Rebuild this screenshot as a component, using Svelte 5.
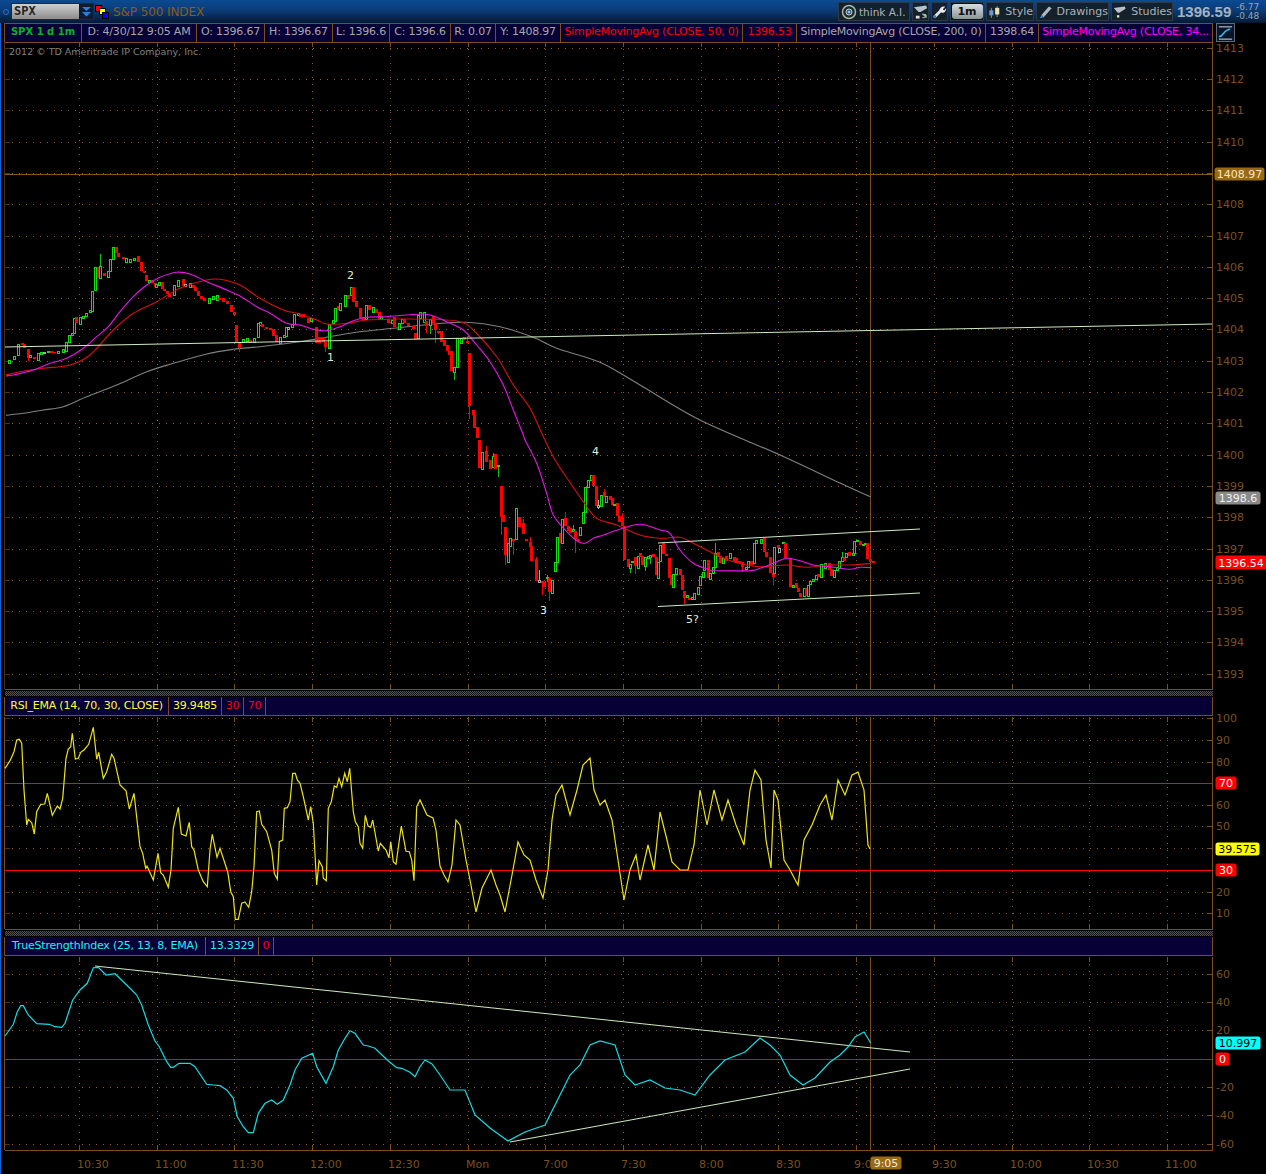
<script>
  const map = (ox, oy, s) =>
    s.trim().split(/\s+/).map((p) => {
      const [x, y] = p.split(',').map(Number);
      return [ox + x / 3, oy + y / 3];
    });
  const path = (pts) => pts.map((p) => p[0].toFixed(1) + ',' + p[1].toFixed(1)).join(' ');
  const smooth = (pts) => {
    let d = 'M' + pts[0][0].toFixed(1) + ' ' + pts[0][1].toFixed(1);
    for (let i = 0; i < pts.length - 1; i++) {
      const p0 = pts[i - 1] ?? pts[i];
      const p1 = pts[i];
      const p2 = pts[i + 1];
      const p3 = pts[i + 2] ?? p2;
      const c1x = p1[0] + (p2[0] - p0[0]) / 6;
      const c1y = p1[1] + (p2[1] - p0[1]) / 6;
      const c2x = p2[0] - (p3[0] - p1[0]) / 6;
      const c2y = p2[1] - (p3[1] - p1[1]) / 6;
      d += `C${c1x.toFixed(1)} ${c1y.toFixed(1)} ${c2x.toFixed(1)} ${c2y.toFixed(1)} ${p2[0].toFixed(1)} ${p2[1].toFixed(1)}`;
    }
    return d;
  };

  const candleGroups = [
    [0, 230, 'g25,390,398 g40,378,388 g50,342,375 r62,340,345 r70,342,355 r80,358,385,,392 g88,376,382 r100,380,387 g110,370,390 g120,366,373 w130,366,369 g140,362,366 r150,363,368 r160,366,370 g170,362,368 g185,358,365 g196,336,362 g204,316,336 g214,310,316 g218,265,310 r226,262,280 g236,262,282 g245,258,265 g256,250,258 g266,240,246 g274,183,242 g281,110,179 r292,112,145 g296,108,145,72 r310,130,138 g320,122,142 g328,86,122 g335,52,88 r345,52,68 r352,68,82 r365,80,88 g375,84,95 g388,88,95 g398,84,90 r412,78,96 r420,96,122 r428,122,130 r436,134,152 g444,150,156 r452,150,158 r462,158,170 g466,163,170 g474,155,165 r482,156,178 r490,178,184 r498,184,192 r505,192,200 g520,166,196 g530,150,168 r545,148,168 w552,163,168 g568,160,170 r576,165,175 r583,172,182 r592,182,198 r600,198,206 r610,204,212 g625,205,218 g636,198,208 g648,196,210 r655,205,210 r665,205,216 r678,214,222 r690,225,245 r700,245,255 r706,285,335 r715,335,355,,365 g725,328,336 g738,325,332 r746,330,340 g760,325,335 g770,280,320 g778,275,285 r784,282,292 r796,290,296 r808,294,300 r816,298,318 r825,315,335 g838,320,340 g848,316,322 g855,292,318 w862,290,296 g872,282,292 g878,252,282 g890,250,256 r898,255,260'],
    [300, 260, 'r5,162,172 r22,175,188 g30,175,184 r45,200,250 r55,232,250 r65,232,246 r72,246,262,,275 g85,192,264 g95,180,188 g103,145,182 r110,138,150 g118,128,150 g133,105,138 r142,105,118 g150,82,105 r157,82,126 r165,124,142 r178,145,175 r185,172,180 g196,136,176 r203,136,150 g216,140,155 r225,148,158 r235,155,180 g241,172,178 r262,178,188 g272,180,190 r280,172,200 g295,190,208 g303,178,190 r310,178,190 r320,190,198 r335,198,206 r343,220,236 g350,165,235 g357,155,175 g368,155,185 r375,182,198,,220 g388,178,195,,222 r397,168,190 r403,190,210,,250 r412,214,218,,222 r420,214,245 r428,240,258 r437,255,272 r445,272,285 r451,272,332 g460,322,335,,360 g467,235,322 g480,235,248 r490,232,240 r497,243,248,228,250 r505,280,438,,478 r515,450,465 r519,465,503 r529,502,535'],
    [440, 440, 'r114,0,83 g124,35,86 r135,33,65,18 r148,60,86 g155,48,82,38 r163,42,86 g172,76,78,,112 r179,138,232,,285 r187,226,245 r192,262,345,,375 g202,310,365 g208,293,317 r216,298,302,,345 g226,205,298 r233,232,262 r245,248,282,238 r256,297,302 r266,305,320,292 r271,318,362 r285,358,422,350 w295,420,425,390 r302,424,430,,465 r310,427,442 g318,410,415,405,425 r325,415,455,,482 g334,420,458 g341,367,392 g349,292,365 r357,278,308 g364,238,308 r373,235,258,215 r380,258,272 r388,265,280 g396,268,272,255 r403,272,296,,338 r412,296,302 g418,262,285 g427,215,250 g433,140,215 g442,120,142 g450,105,120 r457,105,138 r466,138,198 w472,195,200,180,208 g481,165,197 r490,156,172,148 g496,168,185 r508,168,180 r512,175,195 g520,192,196 r527,190,228 r535,228,245 r544,238,258,220 r550,258,360 r560,358,382 g566,372,385,,398 g574,362,367 r582,352,378,,402 g590,347,385 r598,340,350 r604,348,376 g612,350,378,,392 g620,348,354 g628,345,352,,372 r636,342,352 r644,352,405 g652,366,415 g658,315,362 r666,310,342,305 r676,342,348 r683,355,415 r690,405,435 g697,402,440 g706,385,402 r716,388,405 r722,405,450 r730,453,475,,492 g737,465,472 r745,475,480'],
    [650, 520, 'g122,232,236 g128,220,236 g140,202,222 g146,168,195 g155,155,170 g160,120,150 r170,120,175 g178,160,178 g186,140,160 g192,100,140,70 r200,95,110 r208,108,130 g215,115,130 r224,108,122 g238,100,115 r248,110,125 r256,115,128 r265,122,128 r272,125,140,,155 g284,142,146 g290,124,140 r300,124,136 g310,68,128 g316,60,68 g331,58,68 r340,55,95 r346,95,110 r356,110,160 r365,160,170,,195 g370,80,160 r380,75,85 w385,85,95 g395,65,70 r403,68,115 r418,115,200 g425,195,200 r434,190,205 r440,205,215 r448,218,232 g458,205,228 r464,205,228 g472,195,228 g478,182,192 g486,178,182 g494,165,178 r502,163,172 g511,132,170 g522,130,145 r534,130,150 r540,148,168 g550,150,170 g557,142,150 g565,122,145 g572,110,122,95 r580,110,122 g586,98,112 r595,96,108 g605,98,104 g610,62,98 g618,60,64 r628,63,74 g636,72,76 g643,70,72 r649,70,118 r657,118,125 r665,124,128']
  ];

  const candles = candleGroups.flatMap(([ox, oy, s]) =>
    s.split(' ').map((t) => {
      const k = t[0];
      const [x, a, b, wt, wb] = t.slice(1).split(',');
      const cx = Math.round(ox + x / 3);
      return {
        k,
        cx,
        top: Math.round(oy + a / 3),
        bot: Math.round(oy + b / 3),
        wt: wt ? Math.round(oy + wt / 3) : null,
        wb: wb ? Math.round(oy + wb / 3) : null
      };
    })
  );

  const magenta = smooth([
    ...map(0, 230, '18,438 40,435 100,420 150,400 200,385 250,355 290,320 325,290 360,245 400,200 440,165 480,142 530,127 570,132 620,155 680,180 720,198 770,230 810,250 860,280 900,285'),
    ...map(300, 260, '40,208 80,212 120,200 160,182 200,172 260,170 320,165 370,162 400,168 440,185 490,210 530,255 570,305 610,375 640,450 670,525'),
    ...map(440, 440, '255,0 290,70 320,160 340,225 380,275 410,302 435,310 460,295 490,285 540,268 600,253 660,270 690,280'),
    ...map(650, 520, '90,90 130,130 180,150 195,152 300,152 330,145 370,130 410,115 450,122 490,135 550,142 600,148 630,142 665,143')
  ]);
  const redLine = smooth([
    ...map(0, 230, '18,435 60,425 130,415 210,405 270,375 340,300 400,250 470,215 540,175 620,150 660,148 720,165 780,205 850,240 900,252'),
    ...map(300, 260, '50,180 80,192 140,190 200,180 300,177 400,178 480,185 520,210 590,290 640,375 690,445 730,530'),
    ...map(440, 440, '345,60 385,120 430,185 470,235 530,255 600,285 660,295 720,292'),
    ...map(650, 520, '130,70 200,105 250,125 290,135 340,140 410,135 470,142 530,135 600,135 665,130')
  ]);
  const greyLine = smooth([
    ...map(0, 230, '18,556 70,550 130,540 190,530 260,500 350,465 440,425 520,400 620,372 700,358 780,350 900,335'),
    ...map(300, 260, '100,228 180,215 280,205 400,192 500,187 600,200 700,232 770,265 900,307'),
    ...map(0, 0, '1920,1155 2100,1260 2340,1365 2520,1449 2612,1491')
  ]);
  const rsi = path([
    ...map(0, 690, '15,235 30,212 42,185 50,150 58,148 65,160 72,300 80,405 85,388 95,398 103,432 110,365 122,343 134,342 142,310 157,376 172,348 180,357 188,325 198,205 205,177 212,170 217,130 226,207 235,205 242,187 252,180 266,163 280,112 290,208 296,187 310,265 320,245 335,193 342,205 360,285 378,302 388,357 402,310 420,470 428,490 437,535 441,528 460,570 474,490 482,548 490,555 505,592 513,540 520,415 535,352 544,432 558,438 568,397 575,470 582,480 595,540 610,575 622,590 630,480 637,433 651,502 660,475 683,545 692,605 700,620 706,688 715,688 725,640 735,636 746,652 755,605 762,530 770,365 778,363 785,403 800,425 815,480 823,550 832,568 838,455 848,450 853,355 862,353 870,335 878,250 886,250 892,270 900,280 910,320 925,390 932,350 940,400 950,585 957,512 967,530 970,565 979,572 985,355 994,335 1003,288 1010,292 1017,265 1025,290 1034,250 1042,275 1049,235 1060,365 1066,395 1075,410 1080,460 1088,475 1096,376 1104,408 1112,412 1118,390 1135,483 1141,460 1158,480 1167,503 1172,455 1180,515 1188,523 1204,408 1218,484 1228,485 1235,510 1242,572 1250,350 1260,330'),
    ...[[427,815],[433,818],[436,830],[440,866],[444,875],[448,882],[452,865],[456,820],[460,825],[466,860],[470,880],[476,912],[482,888],[486,880],[491,870],[496,885],[500,895],[505,912],[512,875],[518,842],[524,855],[530,860],[536,880],[543,898],[548,870],[552,820],[556,795],[562,785],[570,815],[577,790],[583,765],[590,758],[594,790],[600,805],[605,800],[612,820],[618,860],[624,900],[630,870],[636,855],[640,880],[648,845],[654,870],[660,812],[667,840],[672,862],[680,870],[688,870],[694,845],[700,790],[707,825],[714,790],[722,820],[728,800],[736,825],[744,845],[750,790],[755,770],[761,780],[766,840],[771,868],[774,790],[778,800],[784,860],[790,870],[798,885],[804,840],[812,825],[820,805],[826,795],[832,820],[838,780],[845,795],[852,775],[858,772],[864,790],[868,845],[870,849]]
  ]);
  const tsi = path([
    ...map(0, 935, '15,303 28,285 40,268 52,230 62,212 70,212 85,240 110,266 148,268 165,275 185,277 195,265 205,235 218,195 240,165 262,145 280,98 295,97 318,120 345,116 370,140 390,160 410,180 425,210 445,270 465,318 478,335 500,380 512,397 520,397 537,385 570,385 585,395 620,448 640,450 660,452 680,465 700,490 712,545 730,575 745,593 760,593 775,535 795,505 815,495 832,508 850,495 870,450 885,405 905,370 938,355 950,395 978,445 1000,395 1015,345 1035,310 1050,287 1065,295 1090,330 1105,333 1125,340 1165,378 1190,398 1205,400 1230,412 1245,425 1260,395'),
    ...[[425,1060],[432,1064],[440,1075],[450,1090],[465,1090],[475,1115],[490,1128],[508,1141],[525,1132],[545,1125],[555,1105],[570,1075],[580,1065],[590,1045],[600,1041],[615,1045],[625,1075],[635,1085],[650,1080],[665,1088],[680,1090],[695,1095],[710,1075],[725,1060],[745,1052],[760,1038],[770,1045],[780,1055],[790,1075],[803,1085],[815,1078],[830,1062],[840,1055],[848,1047],[855,1037],[864,1032],[870.7,1043]]
  ]);

  const gridX = Array.from({ length: 15 }, (_, i) => Math.round(79 + 77.72 * i) + 0.5);
  const times = ['10:30','11:00','11:30','12:00','12:30','Mon','7:00','7:30','8:00','8:30','9:00','9:30','10:00','10:30','11:00'];

  const prices = Array.from({ length: 21 }, (_, i) => ({ v: 1413 - i, y: Math.round(47.7 + 31.3 * i) }));
  const rsiTicks = [[100,718],[90,740],[80,762],[70,783],[60,805],[50,826],[40,848],[30,870],[20,892],[10,913]];
  const tsiTicks = [[60,974],[40,1002],[20,1030],[0,1059],[-20,1087],[-40,1115],[-60,1144]];
  const hiddenPrice = 1409, hiddenRsi = [70, 40, 30], hiddenTsi = [0];

  const legend1 = [
    { t: 'SPX 1 d 1m', w: 77, c: 'sym' },
    { t: 'D: 4/30/12 9:05 AM', w: 115 },
    { t: 'O: 1396.67', w: 68 },
    { t: 'H: 1396.67', w: 68 },
    { t: 'L: 1396.6', w: 57 },
    { t: 'C: 1396.6', w: 61 },
    { t: 'R: 0.07', w: 45 },
    { t: 'Y: 1408.97', w: 65 },
    { t: 'SimpleMovingAvg (CLOSE, 50, 0)', w: 182, c: 'red' },
    { t: '1396.53', w: 54, c: 'red' },
    { t: 'SimpleMovingAvg (CLOSE, 200, 0)', w: 189 },
    { t: '1398.64', w: 53 },
    { t: 'SimpleMovingAvg (CLOSE, 34...', w: 174, c: 'mag' }
  ];
  const legend2 = [
    { t: 'RSI_EMA (14, 70, 30, CLOSE)', w: 164, c: 'yel' },
    { t: '39.9485', w: 53, c: 'yel' },
    { t: '30', w: 22, c: 'red' },
    { t: '70', w: 22, c: 'red' }
  ];
  const legend3 = [
    { t: 'TrueStrengthIndex (25, 13, 8, EMA)', w: 201, c: 'cyan' },
    { t: '13.3329', w: 53, c: 'cyan' },
    { t: '0', w: 15, c: 'red' }
  ];
</script>

{#snippet legend(cells, cls)}
  <div class="legend {cls}">
    {#each cells as cell}
      <span class="cell {cell.c ?? ''}" style="width:{cell.w}px">{cell.t}</span>
    {/each}
  </div>
{/snippet}

{#snippet grid(top, bottom, rows, hidden, leftClass)}
  {#each gridX as x}
    <line class="dotv" x1={x} x2={x} y1={top} y2={bottom} />
    <line class="axis" x1={x} x2={x} y1={top} y2={top + 5} />
    <line class="axis" x1={x} x2={x} y1={bottom - 5} y2={bottom} />
  {/each}
  {#each rows as [v, y]}
    <line class="doth" x1="5" x2="1206" y1={y + 0.5} y2={y + 0.5} />
    <line class="axis" x1="1207" x2="1212" y1={y + 0.5} y2={y + 0.5} />
    <line class="axisdim" x1="5" x2="10" y1={y + 0.5} y2={y + 0.5} />
    {#if !hidden.includes(v)}
      <text class="lab" x="1216" y={y + 3.5}>{v}</text>
    {/if}
  {/each}
  <line class="axis" x1="1212.5" x2="1212.5" y1={top} y2={bottom} />
  <line class={leftClass} x1="4.5" x2="4.5" y1={top} y2={bottom} />
  <line class="axis" x1="4.5" x2="1212.5" y1={bottom + 0.5} y2={bottom + 0.5} />
  <line class="axis" x1="870.5" x2="870.5" y1={top} y2={bottom} />
{/snippet}

{#snippet badge(x, y, w, h, fill, txt, tc)}
  <rect x={x + 0.5} y={y + 0.5} width={w} height={h} rx="2.5" fill={fill} />
  <text class="badge" x={x + w / 2 + 0.5} y={y + h / 2 + 4.5} fill={tc}>{txt}</text>
{/snippet}

<div class="app">
  <header class="top">
    <span class="dot"></span>
    <div class="combo">
      <span class="combotxt">SPX</span>
      <span class="drop">
        <svg width="13" height="13" viewBox="0 0 13 13"><path d="M2 2h9L6.5 6zM2 7h9L6.5 11.500z" fill="#2a7fd8" /></svg>
      </span>
    </div>
    <svg class="squares" width="14" height="14" viewBox="0 0 14 14">
      <rect x="0.500" y="0.500" width="6" height="6" fill="#f00" stroke="#000" />
      <rect x="4.500" y="3.500" width="6" height="6" fill="#ff0" stroke="#000" />
      <rect x="7.500" y="7.500" width="6" height="6" fill="#00f" stroke="#000" />
    </svg>
    <span class="title">S&amp;P 500 INDEX</span>

    <div class="tools">
      <div class="btn w72">
        <svg width="16" height="16" viewBox="0 0 16 16"><circle cx="8" cy="8" r="6.500" fill="#1a2a2a" stroke="#a8b4a8" stroke-width="1.500" /><circle cx="8" cy="8" r="3" fill="#2e6a8c" stroke="#ccd" stroke-width="1" /><circle cx="8" cy="8" r="1" fill="#dde" /></svg>
        <span>think A.I.</span>
      </div>
      <div class="btn w17">
        <svg width="16" height="16" viewBox="0 0 16 16"><path d="M1 3L14 1L15 4L8 8L6 8Z" fill="#b8c0c8" /><path d="M3 12h4v3H3z" fill="#dde0d8" /><path d="M10 10l4 4v-3zM10 14h3" fill="#9fc4a8" stroke="#9fc4a8" /></svg>
      </div>
      <div class="btn w17">
        <svg width="16" height="16" viewBox="0 0 16 16"><path d="M3 13L9 7" stroke="#dfe3e6" stroke-width="3" stroke-linecap="round" /><path d="M8 6.500C8 3.500 11 1.500 14 2.500L11.500 5L13 6.500L15 4C15.500 7.500 12.500 9.500 10 8.500Z" fill="#e8eaec" /><circle cx="3" cy="13" r="1.500" fill="#3a7ab8" /></svg>
      </div>
      <div class="btn w34">
        <span class="onem">1m</span>
      </div>
      <div class="btn w48">
        <svg width="16" height="16" viewBox="0 0 16 16"><path d="M4 3v12M11 1v13" stroke="#aab" /><rect x="1.500" y="6" width="5" height="6" fill="#6f96c8" /><rect x="8.500" y="3" width="5" height="8" fill="#e4e2b8" /></svg>
        <span>Style</span>
      </div>
      <div class="btn w73">
        <svg width="16" height="16" viewBox="0 0 16 16"><path d="M4 11L12 2L15 4L6 14Z" fill="#aeb8c4" /><path d="M2 15L4 11L6 14Z" fill="#2a8ae0" /></svg>
        <span>Drawings</span>
      </div>
      <div class="btn w62">
        <svg width="18" height="16" viewBox="0 0 18 16"><path d="M1 3L15 1L16 4L8 9L6 9Z" fill="#b8c0c8" /><path d="M5 12h3v3H5z" fill="#dfe6c8" /></svg>
        <span>Studies</span>
      </div>
    </div>
    <span class="last">1396.59</span>
    <span class="chg"><span>-6.77</span><span>-0.48</span></span>
  </header>

  <div class="legendrow">
    {@render legend(legend1, 'first')}
    <div class="curve">
      <svg width="18" height="16" viewBox="0 0 18 16">
        <path d="M2 1.500H16M2 14.500H16" stroke="#e8e8e8" fill="none" />
        <path d="M2 12C7 12 7 4 14 4" stroke="#2ac4f0" stroke-width="1.500" fill="none" />
      </svg>
    </div>
  </div>

  <svg class="pane" width="1266" height="648" viewBox="0 42 1266 648">
    {@render grid(42, 689, prices.map((p) => [p.v, p.y]), [hiddenPrice], 'axisdim')}
    <text class="copy" x="9" y="55">2012 © TD Ameritrade IP Company, Inc.</text>

    <line x1="5" x2="1212" y1="174.500" y2="174.500" stroke="#8a5a14" />

    <path d={greyLine} class="ma" stroke="#808080" />

    {#each candles as c}
      {#if c.wt !== null}
        <line x1={c.cx + 1.5} x2={c.cx + 1.5} y1={c.wt} y2={c.top} class="cr" stroke={c.k === 'g' ? '#10c010' : c.k === 'r' ? '#f00' : '#aaa'} />
      {/if}
      {#if c.wb !== null}
        <line x1={c.cx + 1.5} x2={c.cx + 1.5} y1={c.bot} y2={c.wb} class="cr" stroke={c.k === 'g' ? '#10c010' : c.k === 'r' ? '#f00' : '#aaa'} />
      {/if}
      {#if c.k === 'r'}
        <rect class="cr" x={c.cx} y={c.top} width="3" height={Math.max(c.bot - c.top, 1)} fill="#f00" />
      {:else}
        <rect class="cr" x={c.cx + 0.5} y={c.top + 0.5} width="2" height={Math.max(c.bot - c.top, 1)} fill="#000" stroke={c.k === 'g' ? '#14dc14' : '#aaa'} />
      {/if}
    {/each}

    <path d={redLine} class="ma" stroke="#d81010" />
    <path d={magenta} class="ma" stroke="#e814e8" />

    <line class="trend" x1="5" x2="1212" y1="347" y2="324" />
    <line class="trend" x1="658" x2="920" y1="543" y2="529" />
    <line class="trend" x1="658" x2="920" y1="606.500" y2="593" />

    <text class="note" x="327" y="361">1</text>
    <text class="note" x="347" y="279">2</text>
    <text class="note" x="540" y="614">3</text>
    <text class="note" x="592" y="455">4</text>
    <text class="note" x="686" y="623">5?</text>

    {@render badge(1214, 167, 50, 13, '#9a6a12', '1408.97', '#f2e6c8')}
    {@render badge(1215, 491, 45, 13, '#8a8a8a', '1398.6', '#f0f0f0')}
    {@render badge(1215, 555, 51, 14, '#ff0000', '1396.54', '#ffffff')}
  </svg>

  <div class="hatch"></div>
  {@render legend(legend2, 'sub')}

  <svg class="pane" width="1266" height="214" viewBox="0 716 1266 214">
    {@render grid(717, 929, rsiTicks, hiddenRsi, 'axis')}
    <line x1="5" x2="1212" y1="783.500" y2="783.500" stroke="#c82010" />
    <line x1="5" x2="1212" y1="870.500" y2="870.500" stroke="#ff0000" />
    <polyline points={rsi} class="osc" stroke="#ece414" />
    {@render badge(1215, 776, 21, 13, '#ff0000', '70', '#fff')}
    {@render badge(1215, 842, 44, 13, '#ffff00', '39.575', '#000')}
    {@render badge(1215, 863, 21, 13, '#ff0000', '30', '#fff')}
  </svg>

  <div class="hatch"></div>
  {@render legend(legend3, 'sub')}

  <svg class="pane" width="1266" height="218" viewBox="0 956 1266 218">
    {@render grid(957, 1150, tsiTicks, hiddenTsi, 'axis')}
    <line x1="5" x2="1212" y1="1059.500" y2="1059.500" stroke="#ff0000" />
    <line class="trend" x1="95" x2="910" y1="966" y2="1052" />
    <line class="trend" x1="510" x2="910" y1="1142" y2="1069" />
    <polyline points={tsi} class="osc" stroke="#14dce4" />
    {#each times as t, i}
      <text class="lab" x={gridX[i] - 2.5} y="1168">{t}</text>
    {/each}
    {@render badge(870, 1156, 31, 13, '#9a6a12', '9:05', '#f6ecd0')}
    {@render badge(1215, 1036, 45, 13, '#00ffff', '10.997', '#000')}
    {@render badge(1215, 1052, 14, 13, '#ff0000', '0', '#fff')}
  </svg>
</div>

<style>
  :global(body) {
    margin: 0;
    background: #000;
  }
  .app {
    width: 1266px;
    height: 1174px;
    overflow: hidden;
    background: #000;
    box-shadow: inset 1px 0 0 #0a66d8;
    font-family: "DejaVu Sans", sans-serif;
    font-size: 11px;
    display: flex;
    flex-direction: column;
  }
  .top {
    height: 23px;
    flex: none;
    display: flex;
    align-items: center;
    padding-left: 3px;
    background: linear-gradient(#0b4a92 0%, #0a3c78 45%, #041a36 100%);
    box-sizing: border-box;
  }
  .dot {
    width: 4px;
    height: 4px;
    border: 1px solid #2a72c8;
    border-radius: 50%;
    margin-right: 3px;
  }
  .combo {
    width: 81px;
    height: 15px;
    display: flex;
    background: linear-gradient(#d0d0d0, #8c8c8c);
    box-shadow: 0 0 0 1px #1a2a40;
  }
  .combotxt {
    flex: 1;
    color: #222;
    font: bold 12px "DejaVu Sans Mono", monospace;
    line-height: 15px;
    padding-left: 2px;
  }
  .drop {
    width: 14px;
    background: #0e1c30;
    display: flex;
    align-items: center;
    justify-content: center;
  }
  .squares {
    margin-left: 2px;
    margin-right: 4px;
  }
  .title {
    color: #8a5c12;
    font-size: 12px;
    letter-spacing: -0.100px;
  }
  .tools {
    margin-left: auto;
    display: flex;
    height: 19px;
    gap: 2px;
  }
  .btn {
    box-sizing: border-box;
    height: 19px;
    background: #16202c;
    border: 1px solid #2c3a48;
    display: flex;
    align-items: center;
    gap: 4px;
    padding-left: 1px;
    color: #a8b4bc;
    font-size: 11px;
    white-space: nowrap;
  }
  .w72 { width: 72px; padding-left: 2px; gap: 2px; font-size: 10.500px; }
  .w17 { width: 17px; padding-left: 0; }
  .w34 { width: 34px; padding: 0; background: #08101a; justify-content: center; }
  .w48 { width: 48px; }
  .w73 { width: 73px; }
  .w62 { width: 62px; }
  .onem {
    width: 31px;
    height: 15px;
    border-radius: 3px;
    background: linear-gradient(#d8dce0, #8c949c);
    color: #111;
    font-weight: bold;
    text-align: center;
    line-height: 15px;
  }
  .last {
    font: bold 15px "Liberation Sans", sans-serif;
    color: #a6b2be;
    margin-left: 4px;
    width: 58px;
  }
  .chg {
    display: flex;
    flex-direction: column;
    font-size: 9px;
    line-height: 9px;
    color: #98a4ae;
    width: 30px;
    white-space: nowrap;
    margin-left: 1px;
  }
  .legendrow {
    display: flex;
    height: 19px;
    flex: none;
  }
  .legend {
    margin-left: 4px;
    height: 20px;
    width: 1209px;
    box-sizing: border-box;
    flex: none;
    display: flex;
    background: #060036;
    border: 1px solid #7a4f1a;
    border-right: none;
    color: #a8a8a8;
  }
  .first {
    box-shadow: inset -1px 0 0 #7a4f1a;
  }
  .sub {
    height: 19px;
    border-top: none;
    box-shadow: inset -1px 0 0 #7a4f1a;
  }
  .sub .cell {
    line-height: 17px;
  }
  .cell {
    flex: none;
    box-sizing: border-box;
    border-right: 1px solid #7a4f1a;
    text-align: center;
    white-space: nowrap;
    overflow: hidden;
    line-height: 16px;
    letter-spacing: -0.220px;
  }
  .sym { color: #08b030; font-weight: bold; font-size: 10px; letter-spacing: 0; }
  .red { color: #ff0000; }
  .mag { color: #ff00ff; }
  .yel { color: #ffff30; }
  .cyan { color: #20f0f8; }
  .curve {
    box-sizing: border-box;
    margin-left: 3px;
    width: 19px;
    height: 19px;
    background: #0a1428;
    border: 1px solid #5a6a78;
    display: flex;
    align-items: center;
    justify-content: center;
  }
  .pane {
    display: block;
    flex: none;
    overflow: visible;
  }
  .hatch {
    flex: none;
    height: 7px;
    width: 1208px;
    margin-left: 5px;
    box-sizing: border-box;
    border-bottom: 1px solid #000;
    border-top: 1px solid #000;
    background: repeating-conic-gradient(#555 0 25%, #111 0 50%) 0 0 / 2px 2px;
  }
  .axis {
    stroke: #7a4f1a;
    shape-rendering: crispEdges;
  }
  .axisdim {
    stroke: #4a3010;
    shape-rendering: crispEdges;
  }
  .dotv,
  .doth {
    stroke: #8c5c22;
    stroke-dasharray: 1 6;
    shape-rendering: crispEdges;
  }
  .lab {
    fill: #7a5020;
    font-size: 11px;
  }
  .copy {
    fill: #808080;
    font-size: 9.500px;
  }
  .note {
    fill: #dcf0d4;
    font-size: 11px;
  }
  .badge {
    font-size: 11px;
    text-anchor: middle;
  }
  .ma {
    fill: none;
    stroke-width: 1.100;
  }
  .osc {
    fill: none;
    stroke-width: 1.200;
  }
  .trend {
    stroke: #cfeac0;
    stroke-width: 1;
  }
  .cr {
    shape-rendering: crispEdges;
  }
</style>
